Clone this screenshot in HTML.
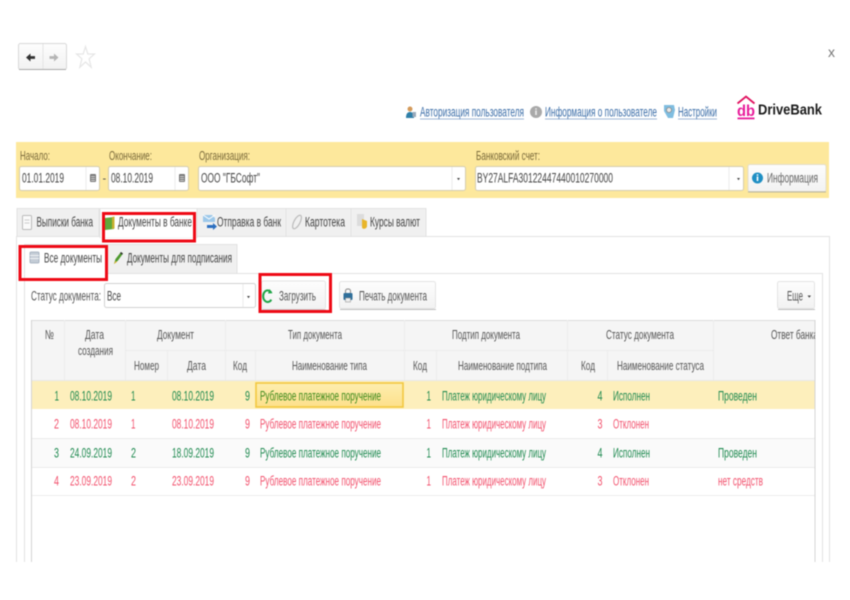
<!DOCTYPE html>
<html><head><meta charset="utf-8"><style>
html,body{margin:0;padding:0;background:#fff;width:850px;height:600px;overflow:hidden}
svg{display:block;filter:blur(.45px)}
text{font-family:"Liberation Sans",sans-serif;font-size:13.5px;fill:#444}
.l{fill:#7a6a3a;font-size:13px}
.a{fill:#3c6ea8;font-size:13.5px}
.h{fill:#555;font-size:13px}
.g{fill:#1f8a50;font-size:13.5px}
.r{fill:#f2506c;font-size:13.5px}
.y{fill:#3d8a1c;font-size:13.5px}
.f{fill:#444}
.ln{stroke:#ececec;stroke-width:1;fill:none}
</style></head><body>
<svg width="850" height="600" viewBox="0 0 850 600" xmlns="http://www.w3.org/2000/svg">
<defs>
<linearGradient id="btn" x1="0" y1="0" x2="0" y2="1"><stop offset="0" stop-color="#fdfdfd"/><stop offset="1" stop-color="#f2f2f2"/></linearGradient>
<linearGradient id="sel" x1="0" y1="0" x2="0" y2="1"><stop offset="0" stop-color="#fdeeb0"/><stop offset="1" stop-color="#fde08a"/></linearGradient>
<clipPath id="tc"><rect x="31" y="320" width="784" height="180"/></clipPath>
</defs>

<!-- nav -->
<rect x="18.500" y="43.500" width="48" height="26" rx="2" fill="url(#btn)" stroke="#d8d8d8"/>
<path d="M19 69.500H66" stroke="#aaa" stroke-width="1"/>
<path d="M43 44V69" stroke="#e4e4e4"/>
<path d="M26 57.500l4.500-4v2.600H35v2.800h-4.500v2.600z" fill="#333"/>
<path d="M58.500 57.500l-4.500-4v2.600H49.500v2.800H54v2.600z" fill="#b5b5b5"/>
<path d="M85.500 46.500l2.300 7.500h6.700l-5.400 4.800 2.100 8.500-5.700-5.300-5.700 5.300 2.100-8.500-5.400-4.800h6.700z" fill="#fff" stroke="#e6e6e6" stroke-width="1.200"/>
<text x="828" y="57" textLength="7" lengthAdjust="spacingAndGlyphs" style="fill:#777">x</text>

<!-- top links -->
<circle cx="410" cy="109" r="2.500" fill="#d49a5a"/>
<path d="M406 118c0-5 2-6 4-6s4 1 4 6z" fill="#2f7fa8"/>
<rect x="412.500" y="112" width="3.500" height="5" fill="#9ab" />
<text class="a" x="420" y="116.500" textLength="104" lengthAdjust="spacingAndGlyphs">Авторизация пользователя</text>
<path d="M420 119H524" stroke="#7f9fc8" stroke-width=".7"/>
<circle cx="536" cy="112" r="6" fill="#a9a9a9"/>
<rect x="535.200" y="110.500" width="1.600" height="4.500" fill="#eee"/><rect x="535.200" y="108.300" width="1.600" height="1.400" fill="#eee"/>
<text class="a" x="545" y="116.500" textLength="112" lengthAdjust="spacingAndGlyphs">Информация о пользователе</text>
<path d="M545 119H657" stroke="#7f9fc8" stroke-width=".7"/>
<path d="M664 105h10l1 5-2 8h-5l-4-7z" fill="#7fbde0"/>
<circle cx="669" cy="110" r="2.500" fill="#e8e8e8" stroke="#888" stroke-width=".8"/>
<text class="a" x="678" y="116.500" textLength="39" lengthAdjust="spacingAndGlyphs">Настройки</text>
<path d="M678 119H717" stroke="#7f9fc8" stroke-width=".7"/>

<!-- logo -->
<path d="M737.500 103.500L746 96.500L754.500 103.500" fill="none" stroke="#e0105e" stroke-width="1.800"/>
<text x="737" y="116" textLength="18" lengthAdjust="spacingAndGlyphs" style="font-size:15.500px;font-weight:bold;fill:#e81b9a">db</text>
<rect x="737.500" y="117.500" width="17" height="1.800" fill="#e81b9a"/>
<text x="758" y="114.500" textLength="64" lengthAdjust="spacingAndGlyphs" style="font-size:14.500px;font-weight:bold;fill:#1a1a1a">DriveBank</text>

<!-- yellow bar -->
<rect x="16" y="142" width="813" height="56" fill="#fde89c"/>
<text class="l" x="20" y="160" textLength="30" lengthAdjust="spacingAndGlyphs">Начало:</text>
<text class="l" x="109" y="160" textLength="43" lengthAdjust="spacingAndGlyphs">Окончание:</text>
<text class="l" x="199" y="160" textLength="51" lengthAdjust="spacingAndGlyphs">Организация:</text>
<text class="l" x="476" y="160" textLength="64" lengthAdjust="spacingAndGlyphs">Банковский счет:</text>

<rect x="19.500" y="166.500" width="80" height="24" rx="2" fill="#fff" stroke="#d4cdb0"/>
<path d="M86 167V190" stroke="#ececec"/>
<rect x="90" y="174" width="6" height="8" rx="1" fill="#777"/><path d="M91 176.500h4M91 178.500h4M91 180.500h4" stroke="#eee" stroke-width=".7"/>
<text class="f" x="22" y="182.500" textLength="42" lengthAdjust="spacingAndGlyphs">01.01.2019</text>
<text class="f" x="102.500" y="182" style="font-size:11px">-</text>
<rect x="108.500" y="166.500" width="80" height="24" rx="2" fill="#fff" stroke="#d4cdb0"/>
<path d="M175 167V190" stroke="#ececec"/>
<rect x="179" y="174" width="6" height="8" rx="1" fill="#777"/><path d="M180 176.500h4M180 178.500h4M180 180.500h4" stroke="#eee" stroke-width=".7"/>
<text class="f" x="111" y="182.500" textLength="42" lengthAdjust="spacingAndGlyphs">08.10.2019</text>
<rect x="198.500" y="166.500" width="267" height="24" rx="2" fill="#fff" stroke="#d4cdb0"/>
<path d="M452 167V190" stroke="#ececec"/>
<path d="M457 178h3l-1.500 2.200z" fill="#444"/>
<text class="f" x="201" y="182.500" textLength="59" lengthAdjust="spacingAndGlyphs">ООО "ГБСофт"</text>
<rect x="475.500" y="166.500" width="268" height="24" rx="2" fill="#fff" stroke="#d4cdb0"/>
<path d="M729 167V190" stroke="#ececec"/>
<path d="M737 178h3l-1.500 2.200z" fill="#444"/>
<text class="f" x="477" y="182.500" textLength="136" lengthAdjust="spacingAndGlyphs">BY27ALFA30122447440010270000</text>
<rect x="748" y="164.500" width="78" height="27" rx="2" fill="url(#btn)" stroke="#e4decb"/>
<path d="M748 192H826" stroke="#b8b5a0"/>
<circle cx="757.500" cy="178" r="5.500" fill="#1f8fc4"/>
<rect x="756.700" y="176.500" width="1.600" height="4.500" fill="#fff"/><rect x="756.700" y="174.300" width="1.600" height="1.400" fill="#fff"/>
<text x="767" y="182.500" textLength="51" lengthAdjust="spacingAndGlyphs" style="fill:#666">Информация</text>

<!-- tabs -->
<path d="M16.500 562V236.500H829.500V562" fill="none" stroke="#e2e2e2"/>
<rect x="17" y="208.500" width="82" height="28" fill="#f0f0f0" stroke="#e2e2e2"/>
<rect x="100" y="208.500" width="97" height="29" fill="#fff" stroke="#e2e2e2"/><path d="M100.500 236.700H196.500" stroke="#fff" stroke-width="2"/>
<rect x="197" y="208.500" width="89" height="28" fill="#f0f0f0" stroke="#e2e2e2"/>
<rect x="286" y="208.500" width="65" height="28" fill="#f0f0f0" stroke="#e2e2e2"/>
<rect x="351" y="208.500" width="75" height="28" fill="#f0f0f0" stroke="#e2e2e2"/>
<rect x="22.500" y="215.500" width="9" height="14" rx="1" fill="#fafafa" stroke="#bbb"/><path d="M24.500 220h5M24.500 223h5" stroke="#ccc"/>
<path d="M105 218l9-1v12l-9 1z" fill="#5fa83a"/><path d="M112 217l2.500-.5v12l-2.500.5z" fill="#c9b030"/>
<path d="M203 215h9l3 3v4h-12z" fill="#9cc8ea"/><path d="M203 215l6 4 6-4" stroke="#fff" fill="none"/><path d="M207 225h6v-2l4 3.500-4 3.500v-2h-6z" fill="#2b6fc0"/>
<ellipse cx="297" cy="222" rx="3" ry="7.500" transform="rotate(28 297 222)" fill="none" stroke="#bbb" stroke-width="1.200"/>
<rect x="357" y="214" width="7" height="12" fill="#dcdcdc"/><path d="M362 219l5 2v5c0 3-5 4-5 1z" fill="#e8b52a"/>
<text x="36.500" y="226.500" textLength="56.500" lengthAdjust="spacingAndGlyphs">Выписки банка</text>
<text x="118" y="226.500" textLength="74" lengthAdjust="spacingAndGlyphs">Документы в банке</text>
<text x="217" y="226.500" textLength="64" lengthAdjust="spacingAndGlyphs">Отправка в банк</text>
<text x="305" y="226.500" textLength="40" lengthAdjust="spacingAndGlyphs">Картотека</text>
<text x="370" y="226.500" textLength="50" lengthAdjust="spacingAndGlyphs">Курсы валют</text>

<!-- sub tabs -->
<path d="M24.500 562V273.500H822.500V562" fill="none" stroke="#e2e2e2"/>
<rect x="107" y="244.500" width="130" height="29" fill="#f0f0f0" stroke="#e2e2e2"/>
<rect x="24.500" y="244.500" width="82" height="30" fill="#fff"/><path d="M24.500 274V244.500H106.500V274" fill="none" stroke="#e2e2e2"/>
<rect x="30" y="252" width="9" height="11" rx="1" fill="#c4ccd6" stroke="#9aa8b8" stroke-width=".8"/><path d="M30 255.500h9M30 258.500h9" stroke="#fff" stroke-width=".7"/>
<path d="M114 264l1.500-5 5.500-7 2 1.500-5 7z" fill="#4e9a2e"/><path d="M121 252l2 1.500-1 1.300-2-1.500z" fill="#333"/><path d="M114 264l1.500-3 1.500 1z" fill="#e8b52a"/>
<text x="44" y="262.500" textLength="58" lengthAdjust="spacingAndGlyphs">Все документы</text>
<text x="127" y="262.500" textLength="105" lengthAdjust="spacingAndGlyphs">Документы для подписания</text>

<!-- toolbar -->
<text x="31" y="300.500" textLength="70" lengthAdjust="spacingAndGlyphs" style="fill:#555">Статус документа:</text>
<rect x="104.500" y="283.500" width="151" height="24" rx="2" fill="#fff" stroke="#d2d2d2"/>
<path d="M243 284V307" stroke="#ececec"/>
<path d="M247 296h3l-1.500 2.200z" fill="#444"/>
<text class="f" x="107" y="300.500" textLength="14" lengthAdjust="spacingAndGlyphs">Все</text>
<rect x="261.500" y="281" width="64" height="28" rx="2" fill="url(#btn)" stroke="#e4e4e4"/>
<path d="M262 310H326" stroke="#c0c0c0"/>
<path d="M271.300 292.800a4.500 5.800 0 1 0 0 6.800" fill="none" stroke="#1fa546" stroke-width="2"/><path d="M269.500 289l3 4.200-4.500.3z" fill="#1fa546"/>
<text x="279" y="300.500" textLength="37" lengthAdjust="spacingAndGlyphs" style="fill:#555">Загрузить</text>
<rect x="339.500" y="281.500" width="96" height="27" rx="2" fill="url(#btn)" stroke="#e4e4e4"/>
<path d="M340 309.500H436" stroke="#c0c0c0"/>
<rect x="345.500" y="289" width="5" height="5" rx="2" fill="none" stroke="#888"/><rect x="343.500" y="293" width="9" height="7" rx="1" fill="#2f6f9a"/><rect x="345.500" y="298" width="5" height="4" fill="#eee" stroke="#888" stroke-width=".5"/>
<text x="359" y="300.500" textLength="68" lengthAdjust="spacingAndGlyphs" style="fill:#555">Печать документа</text>
<rect x="777.500" y="281.500" width="37" height="27" rx="2" fill="url(#btn)" stroke="#e4e4e4"/>
<path d="M778 309.500H815" stroke="#c0c0c0"/>
<text x="787" y="300.500" textLength="16" lengthAdjust="spacingAndGlyphs" style="fill:#555">Еще</text>
<path d="M807.500 295.500h3.500l-1.700 2.200z" fill="#444"/>

<!-- table -->
<rect x="31.500" y="320" width="783" height="60.500" fill="#f5f5f5"/>
<rect x="31.500" y="381" width="783" height="28" fill="#fdefbc"/>
<rect x="32" y="438" width="782" height="29" fill="#fafafa"/>
<path d="M31.500 320.500H815" stroke="#dcdcdc"/>
<path d="M125 350.500H713" class="ln"/>
<path d="M31.500 380.500H815" stroke="#e8e8e8"/>
<path d="M32 438.500H815M32 467.500H815M32 495.500H815" class="ln"/>
<path d="M64.500 320V380M125.500 320V380M167.500 350V380M225.500 320V380M255.500 350V380M404.500 320V380M436.500 350V380M567.500 320V380M607.500 350V380M713.500 320V380" class="ln"/>
<path d="M31.500 320V562M815 320V562" fill="none" stroke="#d4d4d4"/>

<g clip-path="url(#tc)">
<text class="h" x="45" y="339" textLength="9" lengthAdjust="spacingAndGlyphs">№</text>
<text class="h" x="85" y="339" textLength="19" lengthAdjust="spacingAndGlyphs">Дата</text>
<text class="h" x="78" y="355" textLength="35" lengthAdjust="spacingAndGlyphs">создания</text>
<text class="h" x="157" y="339" textLength="37" lengthAdjust="spacingAndGlyphs">Документ</text>
<text class="h" x="288" y="339" textLength="54" lengthAdjust="spacingAndGlyphs">Тип документа</text>
<text class="h" x="452" y="339" textLength="68" lengthAdjust="spacingAndGlyphs">Подтип документа</text>
<text class="h" x="606" y="339" textLength="68" lengthAdjust="spacingAndGlyphs">Статус документа</text>
<text class="h" x="771" y="339" textLength="47" lengthAdjust="spacingAndGlyphs">Ответ банка</text>
<text class="h" x="134" y="370" textLength="25" lengthAdjust="spacingAndGlyphs">Номер</text>
<text class="h" x="187" y="370" textLength="19" lengthAdjust="spacingAndGlyphs">Дата</text>
<text class="h" x="233" y="370" textLength="14" lengthAdjust="spacingAndGlyphs">Код</text>
<text class="h" x="292" y="370" textLength="75" lengthAdjust="spacingAndGlyphs">Наименование типа</text>
<text class="h" x="413" y="370" textLength="14" lengthAdjust="spacingAndGlyphs">Код</text>
<text class="h" x="458" y="370" textLength="89" lengthAdjust="spacingAndGlyphs">Наименование подтипа</text>
<text class="h" x="581" y="370" textLength="14" lengthAdjust="spacingAndGlyphs">Код</text>
<text class="h" x="617" y="370" textLength="87" lengthAdjust="spacingAndGlyphs">Наименование статуса</text>
</g>

<!-- selected cell -->
<rect x="256" y="383" width="147" height="24" fill="url(#sel)" stroke="#f2c840" stroke-width="1.600"/>

<!-- row 1 -->
<text class="g" x="54.500" y="400.500" textLength="4.500" lengthAdjust="spacingAndGlyphs">1</text>
<text class="g" x="70" y="400.500" textLength="42" lengthAdjust="spacingAndGlyphs">08.10.2019</text>
<text class="g" x="131" y="400.500" textLength="4.500" lengthAdjust="spacingAndGlyphs">1</text>
<text class="g" x="172" y="400.500" textLength="42" lengthAdjust="spacingAndGlyphs">08.10.2019</text>
<text class="g" x="245" y="400.500" textLength="5" lengthAdjust="spacingAndGlyphs">9</text>
<text class="y" x="260" y="400.500" textLength="121" lengthAdjust="spacingAndGlyphs">Рублевое платежное поручение</text>
<text class="g" x="426.500" y="400.500" textLength="4.500" lengthAdjust="spacingAndGlyphs">1</text>
<text class="g" x="442" y="400.500" textLength="104" lengthAdjust="spacingAndGlyphs">Платеж юридическому лицу</text>
<text class="g" x="597.500" y="400.500" textLength="5" lengthAdjust="spacingAndGlyphs">4</text>
<text class="g" x="613" y="400.500" textLength="37" lengthAdjust="spacingAndGlyphs">Исполнен</text>
<text class="g" x="718" y="400.500" textLength="39" lengthAdjust="spacingAndGlyphs">Проведен</text>
<!-- row 2 -->
<text class="r" x="54" y="428.500" textLength="5" lengthAdjust="spacingAndGlyphs">2</text>
<text class="r" x="70" y="428.500" textLength="42" lengthAdjust="spacingAndGlyphs">08.10.2019</text>
<text class="r" x="131" y="428.500" textLength="4.500" lengthAdjust="spacingAndGlyphs">1</text>
<text class="r" x="172" y="428.500" textLength="42" lengthAdjust="spacingAndGlyphs">08.10.2019</text>
<text class="r" x="245" y="428.500" textLength="5" lengthAdjust="spacingAndGlyphs">9</text>
<text class="r" x="260" y="428.500" textLength="121" lengthAdjust="spacingAndGlyphs">Рублевое платежное поручение</text>
<text class="r" x="426.500" y="428.500" textLength="4.500" lengthAdjust="spacingAndGlyphs">1</text>
<text class="r" x="442" y="428.500" textLength="104" lengthAdjust="spacingAndGlyphs">Платеж юридическому лицу</text>
<text class="r" x="597.500" y="428.500" textLength="5" lengthAdjust="spacingAndGlyphs">3</text>
<text class="r" x="613" y="428.500" textLength="36" lengthAdjust="spacingAndGlyphs">Отклонен</text>
<!-- row 3 -->
<text class="g" x="54" y="457.500" textLength="5" lengthAdjust="spacingAndGlyphs">3</text>
<text class="g" x="70" y="457.500" textLength="42" lengthAdjust="spacingAndGlyphs">24.09.2019</text>
<text class="g" x="131" y="457.500" textLength="5" lengthAdjust="spacingAndGlyphs">2</text>
<text class="g" x="172" y="457.500" textLength="42" lengthAdjust="spacingAndGlyphs">18.09.2019</text>
<text class="g" x="245" y="457.500" textLength="5" lengthAdjust="spacingAndGlyphs">9</text>
<text class="g" x="260" y="457.500" textLength="121" lengthAdjust="spacingAndGlyphs">Рублевое платежное поручение</text>
<text class="g" x="426.500" y="457.500" textLength="4.500" lengthAdjust="spacingAndGlyphs">1</text>
<text class="g" x="442" y="457.500" textLength="104" lengthAdjust="spacingAndGlyphs">Платеж юридическому лицу</text>
<text class="g" x="597.500" y="457.500" textLength="5" lengthAdjust="spacingAndGlyphs">4</text>
<text class="g" x="613" y="457.500" textLength="37" lengthAdjust="spacingAndGlyphs">Исполнен</text>
<text class="g" x="718" y="457.500" textLength="39" lengthAdjust="spacingAndGlyphs">Проведен</text>
<!-- row 4 -->
<text class="r" x="54" y="485.500" textLength="5" lengthAdjust="spacingAndGlyphs">4</text>
<text class="r" x="70" y="485.500" textLength="42" lengthAdjust="spacingAndGlyphs">23.09.2019</text>
<text class="r" x="131" y="485.500" textLength="5" lengthAdjust="spacingAndGlyphs">2</text>
<text class="r" x="172" y="485.500" textLength="42" lengthAdjust="spacingAndGlyphs">23.09.2019</text>
<text class="r" x="245" y="485.500" textLength="5" lengthAdjust="spacingAndGlyphs">9</text>
<text class="r" x="260" y="485.500" textLength="121" lengthAdjust="spacingAndGlyphs">Рублевое платежное поручение</text>
<text class="r" x="426.500" y="485.500" textLength="4.500" lengthAdjust="spacingAndGlyphs">1</text>
<text class="r" x="442" y="485.500" textLength="104" lengthAdjust="spacingAndGlyphs">Платеж юридическому лицу</text>
<text class="r" x="597.500" y="485.500" textLength="5" lengthAdjust="spacingAndGlyphs">3</text>
<text class="r" x="613" y="485.500" textLength="36" lengthAdjust="spacingAndGlyphs">Отклонен</text>
<text class="r" x="718" y="485.500" textLength="45" lengthAdjust="spacingAndGlyphs">нет средств</text>

<!-- red highlights -->
<rect x="103.500" y="213.500" width="91" height="27.500" fill="none" stroke="#ee0a16" stroke-width="3"/>
<rect x="20" y="246.500" width="86.500" height="33" fill="none" stroke="#ee0a16" stroke-width="3"/>
<rect x="260" y="274.500" width="70.500" height="37" fill="none" stroke="#ee0a16" stroke-width="3"/>
</svg>
</body></html>
